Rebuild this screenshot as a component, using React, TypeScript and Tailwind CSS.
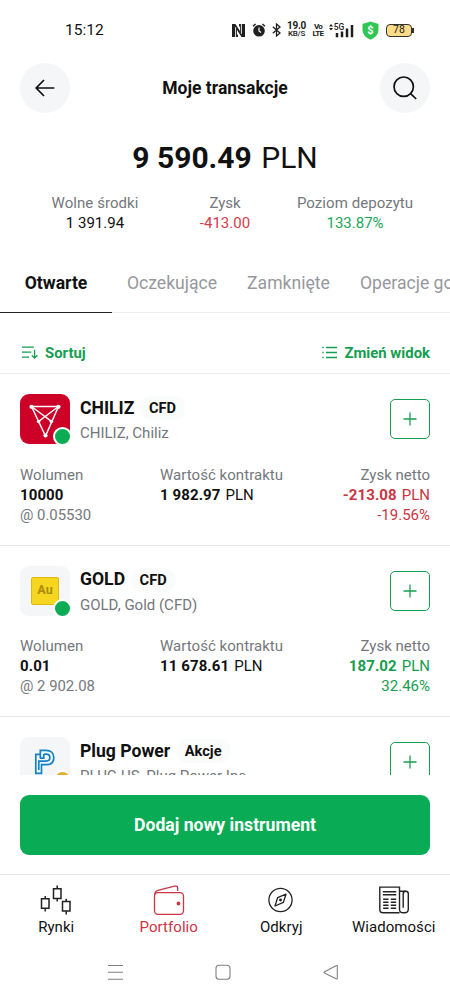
import type { ReactNode } from "react";

interface PositionDetails {
  volume: string;
  openPrice: string;
  value: string;
  profit: string;
  percent: string;
  up: boolean;
}

interface Position {
  name: string;
  kind: string;
  subtitle: string;
  dot: string;
  logo: ReactNode;
  details?: PositionDetails;
}

const ChilizLogo = () => (
  <svg width="50" height="50" viewBox="0 0 50 50" className="rounded-[9px] bg-[#cd0128]">
    <g fill="none" stroke="#fff" strokeWidth="1.5" strokeLinejoin="round">
      <path d="M11.5 12.5H38.5L25.5 42Z" />
      <path d="M11.5 12.5L31.5 27.5M38.5 12.5L18.5 27.5M18.5 27.5L25.2 22.5L31.5 27.5" />
    </g>
    <g fill="#fff">
      <circle cx="11.5" cy="12.8" r="2.1" />
      <circle cx="38.5" cy="12.8" r="2.1" />
      <circle cx="18.6" cy="27.5" r="1.8" />
      <circle cx="31.4" cy="27.5" r="1.8" />
      <circle cx="25.5" cy="41.5" r="2.1" />
    </g>
  </svg>
);

const GoldLogo = () => (
  <div className="flex h-[50px] w-[50px] items-center justify-center rounded-[9px] bg-[#f5f6f8]">
    <div className="flex h-7 w-7 items-center justify-center rounded-[2px] border-[1.5px] border-[#dfb90d] bg-[#f6d61f] text-[12.5px] font-bold text-[#a98c08]">
      Au
    </div>
  </div>
);

const PlugLogo = () => (
  <svg width="50" height="50" viewBox="0 0 50 50" className="rounded-[9px] bg-[#f5f6f8]">
    <g fill="none" stroke="#1283c8" strokeWidth="1.7">
      <path d="M20.3 21.5V13.3H26C31 13.3 33.8 16.5 33.8 20.6C33.8 25 31 27.7 26.5 27.7H21.5V36.3H15.8V17.3H20.3" />
      <path d="M24 17.2H26C28.4 17.2 29.9 18.6 29.9 20.6C29.9 22.8 28.4 24.1 26 24.1H18.8V33" />
      <path d="M23.8 17V21.2H20" />
    </g>
  </svg>
);

const positions: Position[] = [
  {
    name: "CHILIZ",
    kind: "CFD",
    subtitle: "CHILIZ, Chiliz",
    dot: "bg-[#0cac55]",
    logo: <ChilizLogo />,
    details: {
      volume: "10000",
      openPrice: "@ 0.05530",
      value: "1 982.97",
      profit: "-213.08",
      percent: "-19.56%",
      up: false,
    },
  },
  {
    name: "GOLD",
    kind: "CFD",
    subtitle: "GOLD, Gold (CFD)",
    dot: "bg-[#0cac55]",
    logo: <GoldLogo />,
    details: {
      volume: "0.01",
      openPrice: "@ 2 902.08",
      value: "11 678.61",
      profit: "187.02",
      percent: "32.46%",
      up: true,
    },
  },
  {
    name: "Plug Power",
    kind: "Akcje",
    subtitle: "PLUG.US, Plug Power Inc",
    dot: "bg-[#e3ae2c]",
    logo: <PlugLogo />,
  },
];

const StatusBar = () => (
  <div className="flex h-[63px] shrink-0 items-start justify-between pt-5 pr-[36px] pl-[65px]">
    <span className="text-[15.5px] leading-5">15:12</span>
    <div className="flex h-5 items-center text-[#202020]">
      <svg width="13" height="13" viewBox="0 0 13 13" fill="#202020">
        <path d="M0 0H3.4L8 7V2.4H7V0H13V13H9.6L5 6V10.6H6V13H0Z" />
        <path d="M3.6 3.2V13M9.4 0V9.8" stroke="#fff" strokeWidth="0.9" />
      </svg>
      <svg className="ml-[7px]" width="14" height="14" viewBox="0 0 14 14">
        <circle cx="7" cy="7.8" r="5.8" fill="#202020" />
        <path d="M1 3.2L3.6 1M13 3.2L10.4 1" stroke="#202020" strokeWidth="1.5" fill="none" />
        <path d="M7 4.5V8L9 9.5" stroke="#fff" strokeWidth="1.2" fill="none" />
      </svg>
      <svg className="ml-[6px]" width="9" height="14" viewBox="0 0 9 14" fill="none" stroke="#202020" strokeWidth="1.3">
        <path d="M0.8 3.8L8 10L4.5 13V1L8 4L0.8 10.2" />
      </svg>
      <div className="ml-[6px] flex w-[19px] flex-col items-center text-[10px] leading-[8px] font-bold tracking-[-0.3px]">
        <span>19.0</span>
        <span className="text-[8px] leading-[8px] font-medium">KB/S</span>
      </div>
      <div className="ml-[7px] flex w-[10px] flex-col items-center text-[8px] leading-[7px] font-bold tracking-[-0.7px]">
        <span>Vo</span>
        <span>LTE</span>
      </div>
      <svg className="ml-[6px]" width="25" height="15" viewBox="0 0 25 15">
        <path fill="#202020" d="M0 3.5L2 1L4 3.5ZM0 5L2 7.5L4 5Z" />
        <text x="4.7" y="7" fontSize="8.5" fontWeight="500" fill="#202020" fontFamily="Roboto">5G</text>
        <path stroke="#202020" strokeWidth="2.5" d="M8 14.3V10M13 14.3V8.5M18 14.3V5.5M23 14.3V2" />
      </svg>
      <svg className="ml-[8px]" width="17" height="19" viewBox="0 0 17 19">
        <path fill="#2fc653" d="M8.5 0.4L16.5 3V9.5Q16 15.5 8.5 18.8Q1 15.5 0.5 9.5V3Z" />
        <text x="8.5" y="13.2" fontSize="11" fontWeight="700" fill="#fff" textAnchor="middle" fontFamily="Roboto">$</text>
      </svg>
      <div className="ml-[7px] flex h-[13px] w-[26px] items-center justify-center rounded-[4px] border border-[#333] bg-[#fbdc88] text-[10.5px] leading-none">
        78
      </div>
      <div className="h-[5px] w-[2px] bg-[#333]" />
    </div>
  </div>
);

const Header = () => (
  <div className="flex h-[50px] shrink-0 items-center justify-between px-5">
    <button className="flex h-[50px] w-[50px] items-center justify-center rounded-full bg-[#f5f6f8]">
      <svg width="20" height="18" viewBox="0 0 20 18" fill="none" stroke="#111" strokeWidth="1.7">
        <path d="M19.3 9H1.2M9 1L1.2 9L9 17" />
      </svg>
    </button>
    <h1 className="text-[17.5px] font-bold">Moje transakcje</h1>
    <button className="flex h-[50px] w-[50px] items-center justify-center rounded-full bg-[#f5f6f8]">
      <svg width="24" height="24" viewBox="0 0 24 24" fill="none" stroke="#111" strokeWidth="1.7">
        <circle cx="10.7" cy="10.7" r="9.7" />
        <path d="M17.6 17.6L23.2 23" />
      </svg>
    </button>
  </div>
);

const Summary = () => (
  <div className="h-[140px] shrink-0 pt-[25px]">
    <div className="text-center text-[30px] leading-10">
      <span className="font-bold">9 590.49</span> <span className="ml-0.5">PLN</span>
    </div>
    <div className="mt-[15px] flex px-[30px] text-center text-[15px] leading-5">
      <div className="w-[130px]">
        <div className="tracking-[0.06px] text-[#74777c]">Wolne środki</div>
        <div>1 391.94</div>
      </div>
      <div className="w-[130px]">
        <div className="text-[#74777c]">Zysk</div>
        <div className="text-[#d13b4b]">-413.00</div>
      </div>
      <div className="w-[130px]">
        <div className="tracking-[0.06px] text-[#74777c]">Poziom depozytu</div>
        <div className="text-[#19a65a]">133.87%</div>
      </div>
    </div>
  </div>
);

const Tabs = () => (
  <div className="flex h-[60px] shrink-0 items-stretch overflow-hidden text-[17.6px] leading-[60px] whitespace-nowrap text-[#96989d]">
    <div className="w-[112px] shrink-0 border-b border-[#222] text-center font-bold text-[#111]">
      Otwarte
    </div>
    <div className="flex min-w-0 flex-1 overflow-hidden border-b border-[#ececec]">
      <div className="w-[120px] shrink-0 text-center">Oczekujące</div>
      <div className="w-[113px] shrink-0 text-center">Zamknięte</div>
      <div className="ml-[15px] shrink-0">Operacje go</div>
    </div>
  </div>
);

const Toolbar = () => (
  <div className="flex h-[61.4px] shrink-0 items-center justify-between border-b border-[#ececec] pt-[19px] pr-5 pb-0 pl-[22px] text-[14.9px] leading-5 font-bold text-[#169e50]">
    <div className="flex items-center">
      <svg width="16" height="13" viewBox="0 0 16 13" fill="none" stroke="#169e50" strokeWidth="1.3">
        <path d="M0 1.2H12M0 6.2H9.3M0 11.2H7M12.6 3.8V12M9.8 9.2L12.6 12L15.4 9.2" />
      </svg>
      <span className="ml-[7px]">Sortuj</span>
    </div>
    <div className="flex items-center">
      <svg width="15" height="13" viewBox="0 0 15 13" fill="none" stroke="#169e50" strokeWidth="1.3">
        <path d="M4 1.5H15M4 6.5H15M4 11.5H15M0.3 1.5H1.7M0.3 6.5H1.7M0.3 11.5H1.7" />
      </svg>
      <span className="ml-[7px]">Zmień widok</span>
    </div>
  </div>
);

const PositionRow = ({ item }: { item: Position }) => (
  <div className="h-[171.3px] shrink-0 border-b border-[#e7e7e7] px-5 pt-5">
    <div className="flex h-[50px]">
      <div className="relative h-[50px] w-[50px] shrink-0">
        {item.logo}
        <span className={`absolute -right-[2px] -bottom-[2px] h-[19px] w-[19px] rounded-full border-2 border-white ${item.dot}`} />
      </div>
      <div className="ml-[10px] flex-1">
        <div className="flex h-7 items-center">
          <span className="text-[17.6px] font-bold">{item.name}</span>
          <span className="ml-[5.5px] rounded-full bg-[#fafbfb] px-[9px] py-[1px] text-[14.6px] leading-[22px] font-bold">
            {item.kind}
          </span>
        </div>
        <div className="text-[15px] leading-[22px] text-[#74777c]">{item.subtitle}</div>
      </div>
      <button className="mt-[5px] flex h-10 w-10 items-center justify-center rounded-[5px] border border-[#169e50]">
        <svg width="14" height="14" viewBox="0 0 14 14" fill="none" stroke="#169e50" strokeWidth="1.3">
          <path d="M7 0.5V13.5M0.5 7H13.5" />
        </svg>
      </button>
    </div>
    {item.details && (
      <div className="mt-[20.6px] flex text-[15px] leading-5">
        <div className="w-[140px]">
          <div className="tracking-[0.04px] text-[#74777c]">Wolumen</div>
          <div className="font-bold tracking-[0.1px]">{item.details.volume}</div>
          <div className="text-[14.9px] text-[#74777c]">{item.details.openPrice}</div>
        </div>
        <div className="flex-1">
          <div className="tracking-[0.04px] text-[#74777c]">Wartość kontraktu</div>
          <div>
            <span className="font-bold tracking-[0.1px]">{item.details.value}</span>
            <span className="ml-[5px]">PLN</span>
          </div>
        </div>
        <div className={`text-right ${item.details.up ? "text-[#169e50]" : "text-[#ca3543]"}`}>
          <div className="text-[#74777c]">Zysk netto</div>
          <div>
            <span className="font-bold tracking-[0.1px]">{item.details.profit}</span>
            <span className="ml-[5px]">PLN</span>
          </div>
          <div>{item.details.percent}</div>
        </div>
      </div>
    )}
  </div>
);

const BottomNav = () => (
  <div className="grid h-[70px] shrink-0 grid-cols-4 border-t border-[#e7e7e7] text-center text-[15px] leading-5 tracking-[0.04px]">
    <div className="flex flex-col items-center">
      <svg className="mt-[10px]" width="32" height="32" viewBox="0 0 32 32" fill="none" stroke="#222" strokeWidth="1.5">
        <path d="M1.5 13.7H9V23.3H1.5ZM5.2 11V13.7M5.2 23.3V26.5M13.5 3.7H21V13.5H13.5ZM17.2 0.5V3.7M17.2 13.5V16.5M22.5 16.5H30V26H22.5ZM26.2 13.8V16.5M26.2 26V29.5" />
      </svg>
      <span>Rynki</span>
    </div>
    <div className="flex flex-col items-center text-[#cb3545]">
      <svg className="mt-[10px]" width="32" height="32" viewBox="0 0 32 32" fill="none" stroke="#cb3545" strokeWidth="1.3">
        <rect x="1.5" y="7.7" width="29" height="21.6" rx="3.5" />
        <path d="M1.7 10Q1.8 6.3 5 5.4L21.5 1.2Q24.7 0.4 24.7 3.4V6" />
        <circle cx="25.5" cy="18.5" r="1.3" fill="#cb3545" />
      </svg>
      <span>Portfolio</span>
    </div>
    <div className="flex flex-col items-center">
      <svg className="mt-[10px]" width="32" height="32" viewBox="0 1 32 32" fill="none" stroke="#222" strokeWidth="1.3" strokeLinejoin="round">
        <circle cx="15.5" cy="16" r="11.6" />
        <path d="M21 10.2L18.4 18.3L10 22L12.6 13.7Z" />
        <circle cx="15.5" cy="16" r="0.8" fill="#222" />
      </svg>
      <span>Odkryj</span>
    </div>
    <div className="flex flex-col items-center">
      <svg className="mt-[10px]" width="32" height="32" viewBox="0 0.7 32 32" fill="none" stroke="#222" strokeWidth="1.4">
        <path d="M21.5 28.5H5Q1.8 28.5 1.8 25.3V2.8H21.5V25.5Q21.7 28.5 25.2 28.5H27Q30.3 28.3 30.3 24.8V9.5Q30.3 7 27.8 7H21.5" />
        <path d="M25.2 23.5V9.3Q25.3 7 27.8 7" />
        <path d="M4.8 7.5H18.3M4.8 10.5H18.3M5.2 15H10.5M12.8 15H18.2M5.2 18H10.5M12.8 18H18.2M5.2 21H10.5M12.8 21H18.2M5.2 24H10.5M12.8 24H18.2" />
      </svg>
      <span>Wiadomości</span>
    </div>
  </div>
);

const SystemNav = () => (
  <div className="flex h-[56px] shrink-0 items-center justify-between pr-[111px] pl-[108px]">
    <svg width="15" height="16" viewBox="0 0 15 16" stroke="#808080" strokeWidth="1.1">
      <path d="M0 1.5H15M0 8.3H15M0 15.2H15" />
    </svg>
    <svg width="16" height="16" viewBox="0 0 16 16" fill="none" stroke="#808080" strokeWidth="1.1">
      <rect x="1" y="1.3" width="14" height="14" rx="3" />
    </svg>
    <svg width="16" height="16" viewBox="0 0 16 16" fill="none" stroke="#808080" strokeWidth="1.1" strokeLinejoin="round">
      <path d="M14.3 2.2V14.2Q14.2 15.3 13 14.8L1.5 9.1Q0.5 8.4 1.5 7.7L13 1.7Q14.2 1.2 14.3 2.2Z" />
    </svg>
  </div>
);

const App = () => {
  return (
    <div className="flex h-[1000px] w-[450px] flex-col overflow-hidden bg-white font-['Roboto',sans-serif] text-[#111]">
      <StatusBar />
      <Header />
      <Summary />
      <Tabs />
      <Toolbar />
      <div className="flex h-[400.6px] shrink-0 flex-col overflow-hidden">
        {positions.map((item) => (
          <PositionRow key={item.name} item={item} />
        ))}
      </div>
      <div className="h-[99px] shrink-0 px-5 pt-5">
        <button className="h-[60px] w-full rounded-[9px] bg-[#0aab55] text-[17.6px] font-bold text-white">
          Dodaj nowy instrument
        </button>
      </div>
      <BottomNav />
      <SystemNav />
    </div>
  );
};

export default App;
